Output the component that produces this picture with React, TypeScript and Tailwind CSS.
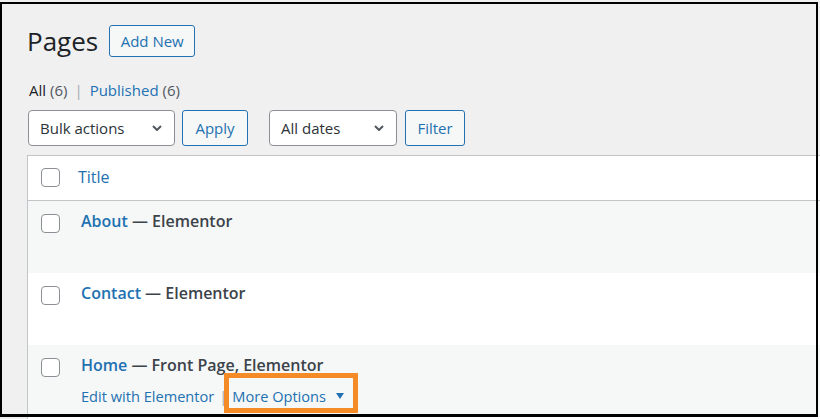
import { ReactNode } from "react";

function Chevron() {
  return (
    <svg width="10" height="6" viewBox="0 0 10 6" className="shrink-0">
      <path d="M1 1l4 4 4-4" fill="none" stroke="#50575e" strokeWidth="2" />
    </svg>
  );
}

function Select({ label, width }: { label: string; width: string }) {
  return (
    <div
      className={`flex h-[36px] items-center justify-between rounded-[4px] border border-[#8c8f94] bg-white pl-[11px] pr-[12px] text-[15px] text-[#2c3338] ${width}`}
    >
      <span>{label}</span>
      <Chevron />
    </div>
  );
}

function Button({ children, className = "" }: { children: ReactNode; className?: string }) {
  return (
    <button
      className={`flex h-[36px] items-center justify-center rounded-[3px] border border-[#2271b1] bg-[#f6f7f7] text-[15px] text-[#2271b1] ${className}`}
    >
      {children}
    </button>
  );
}

function Checkbox() {
  return <span className="block size-[19px] rounded-[4px] border border-[#8c8f94] bg-white" />;
}

interface PageRowProps {
  title: string;
  state: string;
  striped?: boolean;
  actions?: ReactNode;
}

function PageRow({ title, state, striped = false, actions }: PageRowProps) {
  return (
    <div className={`flex h-[72px] shrink-0 ${striped ? "bg-[#f6f7f7]" : "bg-white"}`}>
      <div className="pl-[13px] pt-[13px]">
        <Checkbox />
      </div>
      <div className="ml-[21px] pt-[10px]">
        <p className="text-[16px] leading-[20px] font-[550]">
          <a className="text-[#2271b1]">{title}</a>
          <span className="text-[#3c434a]"> — {state}</span>
        </p>
        {actions}
      </div>
    </div>
  );
}

export default function App() {
  return (
    <div className="relative h-[419px] w-[820px] overflow-hidden bg-[#f0f0f1] font-['Open_Sans',sans-serif]">
      <div className="pl-[27px] pt-[25px]">
        <div className="flex h-[32px] items-center">
          <h1 className="text-[26px] leading-[32px] font-normal text-[#1d2327]">Pages</h1>
          <button className="ml-[11px] flex h-[32px] w-[86px] items-center justify-center rounded-[3px] border border-[#2271b1] bg-[#f6f7f7] text-[15px] text-[#2271b1]">
            Add New
          </button>
        </div>

        <ul className="mt-[23px] flex pl-[2px] text-[15px] leading-[20px] text-[#50575e]">
          <li>
            <span className="text-[#1d2327]">All</span> (6)
            <span className="px-[7px] text-[#a7aaad]">|</span>
          </li>
          <li>
            <span className="text-[#2271b1]">Published</span> (6)
          </li>
        </ul>

        <div className="mt-[10px] flex items-center pl-[1px]">
          <Select label="Bulk actions" width="w-[147px]" />
          <Button className="ml-[7px] w-[66px]">Apply</Button>
          <Select label="All dates" width="ml-[21px] w-[128px]" />
          <Button className="ml-[8px] w-[60px]">Filter</Button>
        </div>

        <div className="mt-[9px] flex w-[900px] flex-col border border-[#c3c4c7] bg-white">
          <div className="flex h-[45px] shrink-0 border-b border-[#c3c4c7]">
            <div className="pl-[13px] pt-[12px]">
              <Checkbox />
            </div>
            <div className="ml-[18px] pt-[11px] text-[16px] leading-[20px] text-[#2271b1]">Title</div>
          </div>

          <PageRow title="About" state="Elementor" striped />
          <PageRow title="Contact" state="Elementor" />
          <PageRow
            title="Home"
            state="Front Page, Elementor"
            striped
            actions={
              <p className="mt-[11px] flex items-center text-[14.6px] leading-[20px] text-[#2271b1]">
                <span>Edit with Elementor</span>
                <span className="px-[5px] text-[#a7aaad]">|</span>
                <span className="relative flex items-center">
                  More Options
                  <svg width="8" height="6" viewBox="0 0 8 6" className="ml-[10px]">
                    <path d="M0 0h8L4 6z" fill="#2271b1" />
                  </svg>
                  <span className="absolute -top-[13px] -bottom-[7px] -left-[8px] -right-[14px] border-[5px] border-[#f58b26]" />
                </span>
              </p>
            }
          />
          <div className="h-[72px] bg-white" />
        </div>
      </div>

      {/* frame around the captured area */}
      <div className="pointer-events-none absolute left-0 top-[2px] h-[415px] w-[818px] border-2 border-b-[3px] border-black" />
    </div>
  );
}
